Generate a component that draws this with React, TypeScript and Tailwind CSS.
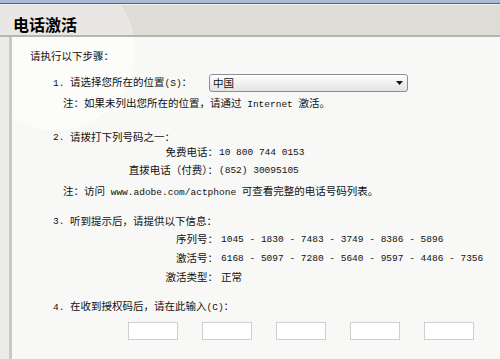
import React from "react"

function M({ children }: { children: React.ReactNode }) {
  return <span className="font-['Liberation_Mono',monospace] text-[9.5px] whitespace-pre">{children}</span>
}

function Step({ n, children, className = "" }: { n: string; children: React.ReactNode; className?: string }) {
  return (
    <div className={`flex h-[14px] items-center pl-[41px] ${className}`}>
      <span className="w-[17px]">
        <M>{n}</M>
      </span>
      <span>{children}</span>
    </div>
  )
}

function Field({ label, children, className = "" }: { label: string; children: React.ReactNode; className?: string }) {
  return (
    <div className={`flex h-[14px] items-center ${className}`}>
      <div className="w-[206px] text-right">{label}</div>
      <div className="pl-[1px]">{children}</div>
    </div>
  )
}

export default function App() {
  return (
    <div className="relative w-[500px] h-[359px] overflow-hidden bg-[#e9e8e4] font-['Noto_Sans_CJK_SC',sans-serif] text-[10.5px] leading-[14px] text-[#111]">
      {/* Window edge */}
      <div className="h-[3px] bg-[#a9bcd6]" />
      <div className="h-px bg-[#56637a]" />
      <div className="h-px bg-[#f2f2f0]" />

      {/* Header */}
      <div className="relative h-[30px] overflow-hidden bg-[#dddcd6]">
        <div className="absolute left-[-25px] top-[-35px] h-[160px] w-[160px] rounded-full bg-[#e8e7e3]" />
        <h1 className="relative pl-[13px] pt-[11px] text-[16px] leading-[16px] font-bold text-black">电话激活</h1>
      </div>
      <div className="h-[2px] bg-[#b6b6ae]" />

      {/* Body */}
      <div className="flex h-full">
        <div className="w-[9px] bg-[#ecebe8]" />
        <div className="w-[3px] bg-[#c9c9c5]" />
        <div className="relative flex-1 overflow-hidden bg-[#f8f8f6]">
          <div className="absolute left-[-37px] top-[-67px] h-[160px] w-[160px] rounded-full bg-[#fcfcfb]" />
          <div className="relative flex flex-col">
            <div className="mt-[12px] h-[14px] pl-[18px]">请执行以下步骤：</div>

            <div className="mt-[10px] flex h-[20px] items-center pl-[41px]">
              <span className="w-[17px]">
                <M>1.</M>
              </span>
              <span className="w-[139px]">
                请选择您所在的位置<M>(S)</M>：
              </span>
              <div className="flex h-[18px] w-[199px] items-center justify-between rounded-[3px] border border-[#8a8f96] bg-gradient-to-b from-white to-[#e2e2e2] pl-[3px] pr-[4px]">
                <span>中国</span>
                <svg width="7" height="4" viewBox="0 0 7 4">
                  <path d="M0 0h7L3.5 4z" fill="#111" />
                </svg>
              </div>
            </div>
            <div className="mt-[3px] h-[14px] pl-[51px]">
              注：如果未列出您所在的位置，请通过<M> Internet </M>激活。
            </div>

            <Step n="2." className="mt-[20px]">请拨打下列号码之一：</Step>
            <Field label="免费电话：" className="mt-[1px]">
              <M>10 800 744 0153</M>
            </Field>
            <Field label="直拨电话（付费）：" className="mt-[4px]">
              <M>(852) 30095105</M>
            </Field>
            <div className="mt-[7px] h-[14px] pl-[51px]">
              注：访问<M> www.adobe.com/actphone </M>可查看完整的电话号码列表。
            </div>

            <Step n="3." className="mt-[16px]">听到提示后，请提供以下信息：</Step>
            <Field label="序列号：" className="mt-[4px]">
              <span className="pl-[2px]">
                <M>1045 - 1830 - 7483 - 3749 - 8386 - 5896</M>
              </span>
            </Field>
            <Field label="激活号：" className="mt-[5px]">
              <span className="pl-[2px]">
                <M>6168 - 5097 - 7280 - 5640 - 9597 - 4486 - 7356</M>
              </span>
            </Field>
            <Field label="激活类型：" className="mt-[5px]">
              <span className="pl-[2px]">正常</span>
            </Field>

            <Step n="4." className="mt-[16px]">
              在收到授权码后，请在此输入<M>(C)</M>：
            </Step>
            <div className="mt-[8px] flex gap-[24px] pl-[116px]">
              {[0, 1, 2, 3, 4].map((i) => (
                <div key={i} className="h-[18px] w-[50px] border border-[#cfcfcf] bg-white" />
              ))}
            </div>
          </div>
        </div>
      </div>
    </div>
  )
}
